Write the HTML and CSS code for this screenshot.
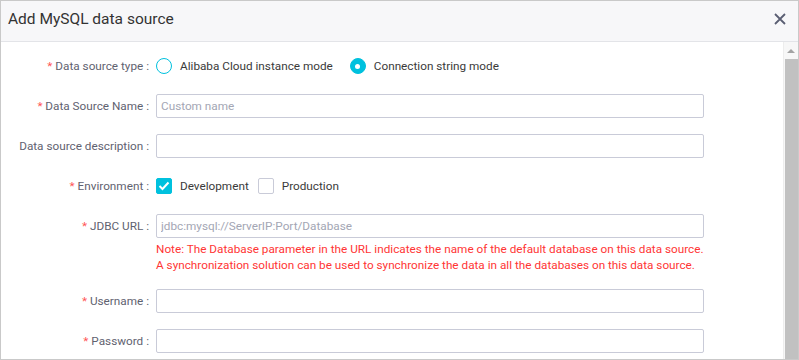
FILE: index.html
```html
<!DOCTYPE html>
<html lang="en">
<head>
    <meta charset="UTF-8">
    <meta name="viewport" content="width=device-width, initial-scale=1.0">
    <link rel="stylesheet" href="styles.css">
    <title>Add MySQL data source</title>
</head>
<body>

    <div class="dialog">

        <div class="dialog-head">
            <div class="dialog-title">Add MySQL data source</div>
            <svg class="close" width="12" height="12" viewBox="0 0 12 12">
                <path d="M1 1 L11 11 M11 1 L1 11" stroke="#5a5e73" stroke-width="1.8" fill="none"/>
            </svg>
        </div>

        <div class="dialog-body">

            <div class="form">

                <div class="row">
                    <div class="label"><span class="req">*</span> Data source type :</div>
                    <div class="control">
                        <label class="option radio-option"><span class="radio"></span>Alibaba Cloud instance mode</label>
                        <label class="option radio-option"><span class="radio checked"></span>Connection string mode</label>
                    </div>
                </div>

                <div class="row">
                    <div class="label"><span class="req">*</span> Data Source Name :</div>
                    <div class="control"><input class="input" placeholder="Custom name"></div>
                </div>

                <div class="row">
                    <div class="label">Data source description :</div>
                    <div class="control"><input class="input"></div>
                </div>

                <div class="row">
                    <div class="label"><span class="req">*</span> Environment :</div>
                    <div class="control">
                        <label class="option check-option">
                            <span class="checkbox checked">
                                <svg width="12" height="10" viewBox="0 0 12 10"><path d="M1.5 5 L4.5 8 L10.5 1.5" stroke="#fff" stroke-width="2" fill="none"/></svg>
                            </span>Development
                        </label>
                        <label class="option check-option"><span class="checkbox"></span>Production</label>
                    </div>
                </div>

                <div class="row row-top">
                    <div class="label"><span class="req">*</span> JDBC URL :</div>
                    <div class="control control-col">
                        <input class="input" placeholder="jdbc:mysql://ServerIP:Port/Database">
                        <div class="note">
                            Note: The Database parameter in the URL indicates the name of the default database on this data source.<br>
                            A synchronization solution can be used to synchronize the data in all the databases on this data source.
                        </div>
                    </div>
                </div>

                <div class="row">
                    <div class="label"><span class="req">*</span> Username :</div>
                    <div class="control"><input class="input"></div>
                </div>

                <div class="row">
                    <div class="label"><span class="req">*</span> Password :</div>
                    <div class="control"><input class="input" type="password"></div>
                </div>

            </div>

            <div class="scrollbar">
                <div class="scroll-arrow"></div>
                <div class="scroll-thumb"></div>
            </div>

        </div>

    </div>

</body>
</html>
```

FILE: styles.css
```css
body {
    margin: 0;
    font-family: Roboto, "Liberation Sans", sans-serif;
    font-size: 11.75px;
    background-color: #fff;
}

.dialog {
    width: 799px;
    height: 360px;
    box-sizing: border-box;
    border: 1px solid #c9c9c9;
    display: flex;
    flex-direction: column;
    overflow: hidden;
}

.dialog-head {
    height: 41px;
    flex-shrink: 0;
    background-color: #f7f7f9;
    border-bottom: 1px solid #e3e4e8;
    display: flex;
    align-items: center;
    justify-content: space-between;
    padding: 0 12px 4px 7px;
    box-sizing: border-box;
}

.dialog-title {
    font-size: 15.5px;
    color: #333;
}

.close {
    display: block;
}

.dialog-body {
    flex: 1;
    display: flex;
    min-height: 0;
}

.form {
    flex: 1;
    padding-top: 12px;
}

.row {
    display: flex;
    align-items: center;
    min-height: 24px;
    margin-bottom: 16px;
}

.row-top {
    align-items: flex-start;
}

.row-top .label {
    line-height: 24px;
}

.label {
    width: 155px;
    flex-shrink: 0;
    box-sizing: border-box;
    padding-right: 7px;
    text-align: right;
    color: #5f6270;
    white-space: nowrap;
}

.req {
    color: #f55;
}

.control {
    display: flex;
    align-items: center;
}

.control-col {
    flex-direction: column;
    align-items: flex-start;
}

.input {
    width: 548px;
    height: 24px;
    box-sizing: border-box;
    border: 1px solid #c9cbd8;
    border-radius: 2px;
    padding: 0 4px;
    font-family: inherit;
    font-size: 11.75px;
    color: #333;
    outline: none;
}

.input::placeholder {
    color: #a3a6b4;
}

.note {
    margin-top: 3px;
    line-height: 16px;
    color: #ff3535;
    white-space: nowrap;
}

.option {
    display: flex;
    align-items: center;
    color: #3a3a3a;
}

.radio-option {
    margin-right: 17px;
}

.check-option {
    margin-right: 9px;
}

.radio {
    width: 16px;
    height: 16px;
    box-sizing: border-box;
    border: 1.5px solid #00c1de;
    border-radius: 50%;
    margin-right: 8px;
    display: flex;
    align-items: center;
    justify-content: center;
}

.radio.checked {
    background-color: #00c1de;
}

.radio.checked::after {
    content: "";
    width: 5px;
    height: 5px;
    border-radius: 50%;
    background-color: #fff;
}

.checkbox {
    width: 16px;
    height: 16px;
    box-sizing: border-box;
    border: 1px solid #c9cbd8;
    border-radius: 2px;
    margin-right: 8px;
    display: flex;
    align-items: center;
    justify-content: center;
}

.checkbox.checked {
    background-color: #00c1de;
    border-color: #00c1de;
}

.scrollbar {
    width: 15px;
    flex-shrink: 0;
    display: flex;
    flex-direction: column;
    border-left: 1px solid #ededed;
    box-sizing: border-box;
    background-color: #f7f7f7;
}

.scroll-arrow {
    height: 17px;
    display: flex;
    justify-content: center;
    align-items: center;
}

.scroll-arrow::before {
    content: "";
    border-left: 4px solid transparent;
    border-right: 4px solid transparent;
    border-bottom: 4px solid #a3a3a3;
}

.scroll-thumb {
    flex: 1;
    margin-left: 1px;
    background-color: #c1c1c1;
}
```
